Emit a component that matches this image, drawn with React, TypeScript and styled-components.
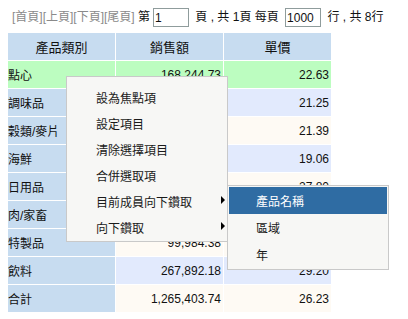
import { FC } from 'react';
import styled, { createGlobalStyle } from 'styled-components';

const GlobalStyle = createGlobalStyle`
  html, body {
    margin: 0;
    padding: 0;
    background: #ffffff;
  }
  body {
    font-family: 'Liberation Sans', 'Noto Sans CJK TC', sans-serif;
    font-size: 12px;
    color: #111;
  }
`;

const Page = styled.div`
  position: relative;
  width: 408px;
  height: 319px;
  padding: 8px;
  box-sizing: border-box;
  overflow: hidden;
`;

const Pager = styled.div`
  display: flex;
  align-items: center;
  height: 19px;
  padding-left: 4px;
  white-space: pre;
  line-height: 19px;
`;

const PagerLink = styled.span`
  color: #8a8a8a;
`;

const PagerInput = styled.input`
  box-sizing: border-box;
  width: 36px;
  height: 19px;
  margin: 0 3px;
  padding: 0 1px;
  border: 1px solid #8f9c9c;
  font-family: inherit;
  font-size: 12px;
  color: #111;
  background: #fff;
  outline: none;
`;

const Grid = styled.div`
  display: grid;
  grid-template-columns: 107px 107px 107px;
  grid-auto-rows: 27px;
  gap: 1px;
  width: 323px;
  margin-top: 6px;
  background: #ffffff;
`;

const HeadCell = styled.div`
  display: flex;
  align-items: center;
  justify-content: center;
  background: #c7dcf0;
  font-size: 13px;
`;

const Cell = styled.div<{ $bg: string; $num?: boolean }>`
  display: flex;
  align-items: center;
  justify-content: ${(p) => (p.$num ? 'flex-end' : 'flex-start')};
  padding: ${(p) => (p.$num ? '0 2px 0 0' : '0')};
  background: ${(p) => p.$bg};
  font-size: 12px;
  white-space: nowrap;
`;

const Menu = styled.div<{ $left: number; $top: number; $pad: number }>`
  position: absolute;
  left: ${(p) => p.$left}px;
  top: ${(p) => p.$top}px;
  width: 162px;
  box-sizing: border-box;
  padding: ${(p) => p.$pad}px 1px 1px 1px;
  background: #f7f7f5;
  border: 1px solid #c9c9c9;
  z-index: 2;
`;

const MenuItem = styled.div<{ $active?: boolean; $h: number; $indent: number }>`
  position: relative;
  height: ${(p) => p.$h}px;
  display: flex;
  align-items: center;
  padding-left: ${(p) => p.$indent}px;
  font-size: 12px;
  color: ${(p) => (p.$active ? '#ffffff' : '#1a1a1a')};
  background: ${(p) => (p.$active ? '#2f6ca3' : 'transparent')};
`;

const Arrow = styled.span`
  position: absolute;
  right: 1px;
  top: 50%;
  margin-top: -5px;
  width: 0;
  height: 0;
  border-top: 4px solid transparent;
  border-bottom: 4px solid transparent;
  border-left: 4px solid #000;
`;

const GREEN = '#bcfdc0';
const SIDE = '#c7dcf0';
const BLUE = '#e2eafd';
const CREAM = '#fefaf4';

const rows = [
  { name: '點心', sales: '168,244.73', price: '22.63' },
  { name: '調味品', sales: '168,244.73', price: '21.25' },
  { name: '穀類/麥片', sales: '95,744.59', price: '21.39' },
  { name: '海鮮', sales: '141,623.09', price: '19.06' },
  { name: '日用品', sales: '251,330.50', price: '27.80' },
  { name: '肉/家畜', sales: '178,188.80', price: '53.36' },
  { name: '特製品', sales: '99,984.38', price: '35.42' },
  { name: '飲料', sales: '267,892.18', price: '29.20' },
  { name: '合計', sales: '1,265,403.74', price: '26.23' },
];

const mainItems = ['設為焦點項', '設定項目', '清除選擇項目', '合併選取項', '目前成員向下鑽取', '向下鑽取'];
const subItems = ['產品名稱', '區域', '年'];

const App: FC = () => {
  return (
    <Page>
      <GlobalStyle />
      <Pager>
        <PagerLink>[首頁][上頁][下頁][尾頁]</PagerLink>
        <span> 第</span>
        <PagerInput defaultValue='1' />
        <span> 頁 , 共 1頁 每頁 </span>
        <PagerInput defaultValue='1000' />
        <span> 行 , 共 8行</span>
      </Pager>

      <Grid>
        <HeadCell>產品類別</HeadCell>
        <HeadCell>銷售額</HeadCell>
        <HeadCell>單價</HeadCell>
        {rows.map((r, i) => {
          const bg = i === 0 ? GREEN : i % 2 === 1 ? BLUE : CREAM;
          return [
            <Cell key={r.name + 'n'} $bg={i === 0 ? GREEN : SIDE}>
              {r.name}
            </Cell>,
            <Cell key={r.name + 's'} $bg={bg} $num>
              {r.sales}
            </Cell>,
            <Cell key={r.name + 'p'} $bg={bg} $num>
              {r.price}
            </Cell>,
          ];
        })}
      </Grid>

      <Menu $left={66} $top={76} $pad={7}>
        {mainItems.map((m, i) => (
          <MenuItem key={m} $h={26} $indent={28}>
            {m}
            {i >= 4 && <Arrow />}
          </MenuItem>
        ))}
      </Menu>

      <Menu $left={227} $top={185} $pad={1}>
        {subItems.map((m, i) => (
          <MenuItem key={m} $h={27} $indent={27} $active={i === 0}>
            {m}
          </MenuItem>
        ))}
      </Menu>
    </Page>
  );
};

export default App;
